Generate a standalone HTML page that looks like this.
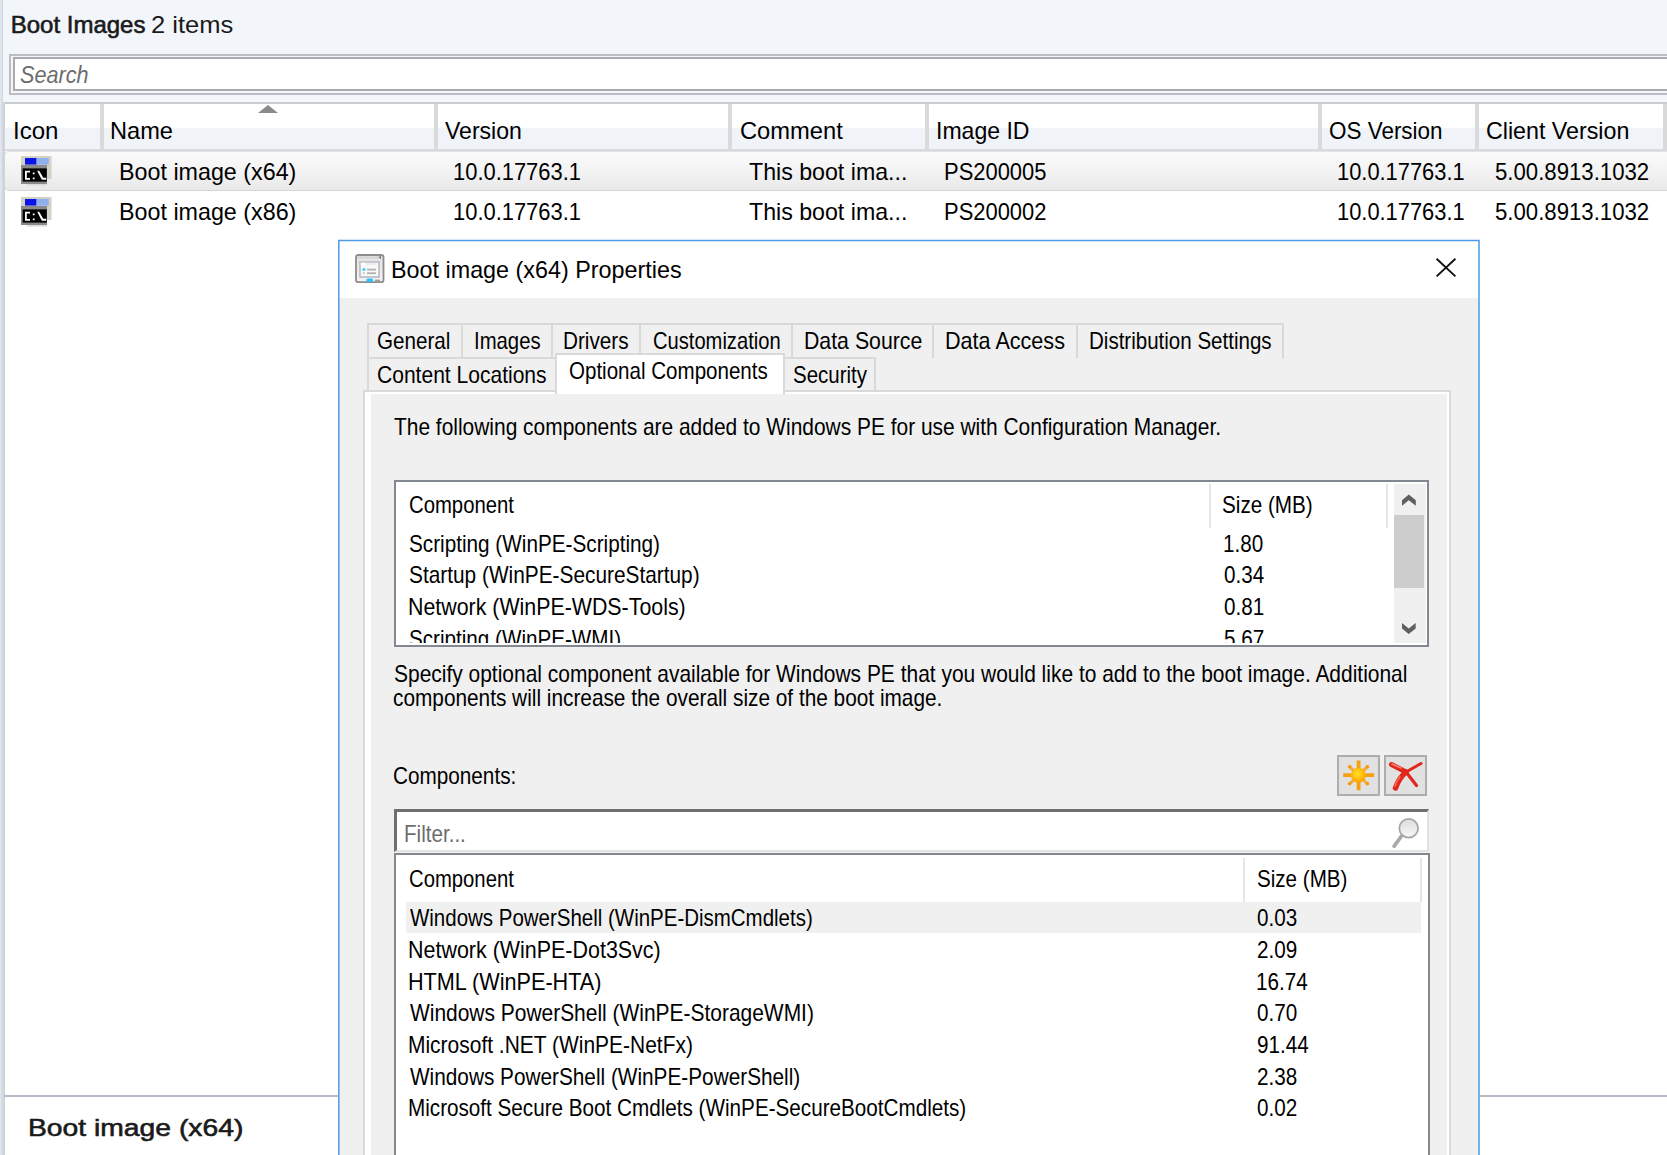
<!DOCTYPE html>
<html><head><meta charset="utf-8">
<style>
html,body{margin:0;padding:0}
body{width:1667px;height:1155px;overflow:hidden;position:relative;background:#fff;font-family:"Liberation Sans",sans-serif}
.a{position:absolute;box-sizing:border-box}
.t{position:absolute;white-space:pre;line-height:60px;font-family:"Liberation Sans",sans-serif;transform-origin:0 0}
</style></head><body>
<!-- console top band -->
<div class="a" style="left:0;top:0;width:1667px;height:102px;background:#f2f5fa"></div>
<!-- search box -->
<div class="a" style="left:9px;top:54px;width:1700px;height:41px;border:2px solid #babdc3;background:#f4f6f9"></div>
<div class="a" style="left:13px;top:57px;width:1700px;height:34px;border:2px solid #a9abb1;background:#fff"></div>
<!-- list header -->
<div class="a" style="left:3px;top:102px;width:1664px;height:2px;background:#c9ccd2"></div>
<div class="a" style="left:3px;top:104px;width:1664px;height:24px;background:#fff"></div>
<div class="a" style="left:3px;top:128px;width:1664px;height:21px;background:#f0f3f7"></div>
<div class="a" style="left:3px;top:149px;width:1664px;height:2px;background:#d7dadf"></div>
<div class="a" style="left:100px;top:104px;width:3.6px;height:45px;background:#dadada"></div>
<div class="a" style="left:434px;top:104px;width:3.6px;height:45px;background:#dadada"></div>
<div class="a" style="left:728px;top:104px;width:3.6px;height:45px;background:#dadada"></div>
<div class="a" style="left:925px;top:104px;width:3.6px;height:45px;background:#dadada"></div>
<div class="a" style="left:1318px;top:104px;width:3.6px;height:45px;background:#dadada"></div>
<div class="a" style="left:1475px;top:104px;width:3.6px;height:45px;background:#dadada"></div>
<div class="a" style="left:1663px;top:104px;width:4px;height:45px;background:#d9d9d9"></div>
<svg class="a" style="left:256px;top:103px" width="24" height="12"><polygon points="2,10 12,2 22,10" fill="#8a8a8a"/></svg>
<!-- selected row -->
<div class="a" style="left:4px;top:151px;width:1680px;height:40px;background:linear-gradient(#fbfbfb,#f1f1f1 60%,#e9e9e9);border:1px solid #d6d6d6;border-top-color:#e2e2e2;border-radius:5px 0 0 5px"></div>
<!-- cmd icons -->
<svg class="a" style="left:20px;top:154px" width="34" height="34" viewBox="20 154 34 34">
 <rect x="27" y="184.0" width="20" height="1.6" fill="#dcdcdc"/>
 <rect x="21" y="156.0" width="30.5" height="23" fill="#d2d2c8"/>
 <rect x="25" y="158.0" width="11.6" height="6.6" fill="#0a14e6"/>
 <rect x="36.6" y="158.0" width="12.1" height="6.6" fill="#8eb0ee"/>
 <rect x="21" y="165.0" width="26" height="3.5" fill="#9a9a9a"/>
 <rect x="21" y="165.0" width="26" height="19" fill="#8a8a8a"/>
 <rect x="22.6" y="168.4" width="24.2" height="13.2" fill="#000"/>
 <path d="M25 170.7 h5 v1.8 h-3.2 v5.4 h3.2 v1.8 h-5z M32.8 172.5 h1.8 v1.8 h-1.8z M32.8 177.5 h1.8 v1.8 h-1.8z M37.2 170.7 h2 l4.6 8 v1 h-2z M43.2 177.8 h3 v2 h-3z" fill="#fff"/>
</svg>
<svg class="a" style="left:20px;top:195px" width="34" height="34" viewBox="20 195 34 34">
 <rect x="27" y="225.0" width="20" height="1.6" fill="#dcdcdc"/>
 <rect x="21" y="197.0" width="30.5" height="23" fill="#d2d2c8"/>
 <rect x="25" y="199.0" width="11.6" height="6.6" fill="#0a14e6"/>
 <rect x="36.6" y="199.0" width="12.1" height="6.6" fill="#8eb0ee"/>
 <rect x="21" y="206.0" width="26" height="3.5" fill="#9a9a9a"/>
 <rect x="21" y="206.0" width="26" height="19" fill="#8a8a8a"/>
 <rect x="22.6" y="209.4" width="24.2" height="13.2" fill="#000"/>
 <path d="M25 211.7 h5 v1.8 h-3.2 v5.4 h3.2 v1.8 h-5z M32.8 213.5 h1.8 v1.8 h-1.8z M32.8 218.5 h1.8 v1.8 h-1.8z M37.2 211.7 h2 l4.6 8 v1 h-2z M43.2 218.8 h3 v2 h-3z" fill="#fff"/>
</svg>
<!-- left border -->
<div class="a" style="left:0;top:0;width:3.2px;height:1155px;background:linear-gradient(90deg,#e4eaf2,#d9e0ea 50%,#cdd5e1)"></div>
<div class="a" style="left:3.2px;top:102px;width:1.6px;height:1053px;background:#d2d3d6"></div>
<!-- detail pane line -->
<div class="a" style="left:4px;top:1095px;width:1663px;height:2px;background:#b3bac5"></div>

<!-- dialog -->
<div class="a" style="left:338px;top:240px;width:1142px;height:940px;background:#f0f0f0"></div>
<div class="a" style="left:339px;top:241px;width:1140px;height:56.5px;background:#fff"></div>
<svg class="a" style="left:336px;top:238px" width="1146" height="920" viewBox="336 238 1146 920"><path d="M338.8 1160 V240.6 H1479 V1160" fill="none" stroke="#4f9ce6" stroke-width="1.5"/></svg>
<!-- title icon -->
<svg class="a" style="left:350px;top:248px" width="40" height="40" viewBox="350 248 40 40">
 <defs><linearGradient id="tg" x1="0" y1="0" x2="0" y2="1"><stop offset="0" stop-color="#e2e2e2"/><stop offset="1" stop-color="#f4f4f4"/></linearGradient></defs>
 <rect x="356" y="255" width="27.5" height="27.2" rx="2.2" fill="url(#tg)" stroke="#8c8c8c" stroke-width="1.8"/>
 <rect x="358" y="256.6" width="22" height="2" fill="#d4d4d4"/>
 <path d="M378.4 256.6 h2.6 v2.6z" fill="#6a6a6a"/>
 <rect x="360" y="262" width="19" height="15" fill="#f8f8f8" stroke="#b6bbc5" stroke-width="1.6"/>
 <rect x="360.8" y="262.5" width="4" height="3" fill="#fff"/>
 <rect x="366.5" y="262.6" width="3.6" height="2.2" fill="#e6e6e6"/><rect x="371.6" y="262.6" width="3.6" height="2.2" fill="#e6e6e6"/>
 <circle cx="363.9" cy="269.5" r="1.6" fill="#45d0ff"/>
 <rect x="367" y="268.7" width="9" height="1.8" fill="#b2b2b2"/>
 <rect x="363" y="272.3" width="1.6" height="1.6" fill="#b8b8b8"/>
 <rect x="367" y="272.3" width="9" height="1.8" fill="#b2b2b2"/>
 <rect x="366.3" y="278.5" width="6.9" height="3.4" rx="1.6" fill="#2ec0f8"/>
 <rect x="375" y="279.6" width="5" height="1.8" fill="#9c9c9c"/>
</svg>
<!-- close X -->
<svg class="a" style="left:1434px;top:257px" width="24" height="22" viewBox="0 0 24 22">
 <path d="M2.6 1.8 L21.4 19.4 M21.4 1.8 L2.6 19.4" stroke="#111" stroke-width="1.9"/>
</svg>

<!-- tabs row 1 -->
<div class="a" style="left:367px;top:323px;width:917px;height:36px;border:2px solid #d9d9d9;border-bottom:none;background:#f0f0f0"></div>
<div class="a" style="left:461px;top:325px;width:2px;height:33px;background:#d9d9d9"></div>
<div class="a" style="left:551px;top:325px;width:2px;height:33px;background:#d9d9d9"></div>
<div class="a" style="left:639px;top:325px;width:2px;height:33px;background:#d9d9d9"></div>
<div class="a" style="left:791px;top:325px;width:2px;height:33px;background:#d9d9d9"></div>
<div class="a" style="left:932px;top:325px;width:2px;height:33px;background:#d9d9d9"></div>
<div class="a" style="left:1076px;top:325px;width:2px;height:33px;background:#d9d9d9"></div>
<!-- tabs row 2 -->
<div class="a" style="left:367px;top:357px;width:191px;height:36px;border:2px solid #d9d9d9;border-bottom:none;background:#f0f0f0"></div>
<div class="a" style="left:782px;top:357px;width:94px;height:36px;border:2px solid #d9d9d9;border-bottom:none;background:#f0f0f0"></div>
<!-- panel -->
<div class="a" style="left:363px;top:390px;width:1088px;height:800px;border:2px solid #d9d9d9;border-bottom:none;background:#fff"></div>
<div class="a" style="left:371px;top:394px;width:1076px;height:800px;background:#f0f0f0"></div>
<!-- selected tab -->
<div class="a" style="left:555px;top:353px;width:230px;height:41px;background:#fff;border:2px solid #d9d9d9;border-bottom:none"></div>
<div class="a" style="left:557px;top:389px;width:226px;height:5px;background:#fff"></div>

<!-- list 1 -->
<div class="a" style="left:394px;top:480px;width:1035px;height:167px;border:2px solid #828790;background:#fff"></div>
<div class="a" style="left:1209px;top:484px;width:2px;height:44px;background:#e5e5e5"></div>
<div class="a" style="left:1386px;top:484px;width:2px;height:44px;background:#e5e5e5"></div>
<div class="a" style="left:1394px;top:483.5px;width:32px;height:159.5px;background:#f0f0f0"></div>
<div class="a" style="left:1394px;top:515px;width:30px;height:73px;background:#cdcdcd"></div>
<svg class="a" style="left:1394px;top:484px" width="32" height="160" viewBox="1394 484 32 160">
 <polygon points="1402,505.7 1408.8,500.3 1415.8,505.7 1415.8,500.3 1408.8,494.6 1402,500.3" fill="#606060"/>
 <polygon points="1402,623.1 1408.7,628.5 1415.7,623.1 1415.7,628.5 1408.7,634 1402,628.5" fill="#606060"/>
</svg>


<!-- buttons -->
<div class="a" style="left:1337px;top:755px;width:43px;height:41px;border:2px solid #adadad;background:#e1e1e1"></div>
<div class="a" style="left:1384px;top:755px;width:43px;height:41px;border:2px solid #adadad;background:#e1e1e1"></div>
<svg class="a" style="left:1338px;top:756px" width="42" height="40" viewBox="1338 756 42 40">
 <defs><radialGradient id="sg" cx=".45" cy=".4" r=".6"><stop offset="0" stop-color="#ffe030"/><stop offset=".55" stop-color="#ffc00a"/><stop offset="1" stop-color="#ffa000"/></radialGradient></defs>
 <g stroke="#f5a00f" stroke-width="3.8">
  <path d="M1358.6 760.5 V790.3 M1343.2 775.2 H1374.2"/>
 </g>
 <g stroke="#f6a415" stroke-width="3" opacity=".85">
  <path d="M1349.4 766.6 L1367.6 784 M1367.6 766.6 L1349.4 784"/>
 </g>
 <circle cx="1349.6" cy="766.8" r="1.8" fill="#f39a0a"/><circle cx="1367.4" cy="766.8" r="1.8" fill="#f39a0a"/>
 <circle cx="1349.6" cy="783.8" r="1.8" fill="#f39a0a"/><circle cx="1367.4" cy="783.8" r="1.8" fill="#f39a0a"/>
 <circle cx="1358.4" cy="775.2" r="7.4" fill="url(#sg)"/>
</svg>
<svg class="a" style="left:1385px;top:756px" width="42" height="40" viewBox="1385 756 42 40">
 <g stroke="#e2261a" stroke-linecap="round" fill="none">
  <path d="M1391.5 764.5 L1406 772" stroke-width="5"/>
  <path d="M1406 772 L1416.5 785.5" stroke-width="3.2"/>
  <path d="M1421 763.5 L1406 772" stroke-width="3"/>
  <path d="M1406 772 Q1399 778 1395.5 788" stroke-width="5.4"/>
 </g>
 <path d="M1392 764 L1401 768" stroke="#ff8074" stroke-width="1.6" fill="none" stroke-linecap="round"/>
 <path d="M1395 786 Q1397 780 1400 777" stroke="#ff6a5c" stroke-width="1.6" fill="none" stroke-linecap="round"/>
</svg>

<!-- filter box -->
<div class="a" style="left:394px;top:809px;width:1035px;height:43px;background:#fff;border-top:3px solid #6f6f6f;border-left:3px solid #6f6f6f;border-right:2px solid #e3e3e3;border-bottom:2px solid #e3e3e3"></div>
<svg class="a" style="left:1385px;top:814px" width="40" height="36" viewBox="1385 814 40 36">
 <defs><linearGradient id="mgg" x1="0" y1="0" x2="0" y2="1"><stop offset="0" stop-color="#dcdcdc"/><stop offset="1" stop-color="#f8f8f8"/></linearGradient></defs>
 <path d="M1401.8 835.6 L1394 846.4" stroke="#a9a9a9" stroke-width="3.6" stroke-linecap="round"/>
 <circle cx="1408.7" cy="828.2" r="9.4" fill="url(#mgg)" stroke="#a6a6a6" stroke-width="1.8"/>
</svg>

<!-- list 2 -->
<div class="a" style="left:394px;top:853px;width:1036px;height:340px;border:2px solid #828790;background:#fff"></div>
<div class="a" style="left:1243px;top:858px;width:2px;height:44px;background:#e5e5e5"></div>
<div class="a" style="left:1420px;top:858px;width:2px;height:44px;background:#e5e5e5"></div>
<div class="a" style="left:406px;top:902px;width:1015px;height:31px;background:#f0f0f0"></div>

<div class="t" style="left:10.70px;top:-5.00px;font-size:24px;color:#1a1a1a;-webkit-text-stroke:0.6px #1a1a1a;">Boot Images</div>
<div class="t" style="left:151.14px;top:-5.00px;font-size:24px;color:#1a1a1a;transform:scaleX(1.0632);">2 items</div>
<div class="t" style="left:20.10px;top:45.20px;font-size:24px;color:#6d6d6d;font-style:italic;transform:scaleX(0.9014);">Search</div>
<div class="t" style="left:12.50px;top:101.00px;font-size:24px;color:#000;transform:scaleX(1.0024);">Icon</div>
<div class="t" style="left:110.43px;top:101.00px;font-size:24px;color:#000;transform:scaleX(0.9836);">Name</div>
<div class="t" style="left:445.00px;top:101.00px;font-size:24px;color:#000;transform:scaleX(0.9600);">Version</div>
<div class="t" style="left:739.51px;top:101.00px;font-size:24px;color:#000;transform:scaleX(0.9874);">Comment</div>
<div class="t" style="left:935.58px;top:101.00px;font-size:24px;color:#000;transform:scaleX(0.9600);">Image ID</div>
<div class="t" style="left:1328.76px;top:101.00px;font-size:24px;color:#000;transform:scaleX(0.9353);">OS Version</div>
<div class="t" style="left:1485.73px;top:101.00px;font-size:24px;color:#000;transform:scaleX(0.9678);">Client Version</div>
<div class="t" style="left:119.06px;top:141.70px;font-size:24px;color:#000;transform:scaleX(0.9704);">Boot image (x64)</div>
<div class="t" style="left:453.37px;top:141.70px;font-size:24px;color:#000;transform:scaleX(0.9131);">10.0.17763.1</div>
<div class="t" style="left:748.60px;top:141.70px;font-size:24px;color:#000;transform:scaleX(0.9654);">This boot ima...</div>
<div class="t" style="left:943.77px;top:141.70px;font-size:24px;color:#000;transform:scaleX(0.9138);">PS200005</div>
<div class="t" style="left:1337.38px;top:141.70px;font-size:24px;color:#000;transform:scaleX(0.9109);">10.0.17763.1</div>
<div class="t" style="left:1494.58px;top:141.70px;font-size:24px;color:#000;transform:scaleX(0.9242);">5.00.8913.1032</div>
<div class="t" style="left:119.06px;top:182.30px;font-size:24px;color:#000;transform:scaleX(0.9704);">Boot image (x86)</div>
<div class="t" style="left:453.37px;top:182.30px;font-size:24px;color:#000;transform:scaleX(0.9131);">10.0.17763.1</div>
<div class="t" style="left:748.60px;top:182.30px;font-size:24px;color:#000;transform:scaleX(0.9654);">This boot ima...</div>
<div class="t" style="left:943.77px;top:182.30px;font-size:24px;color:#000;transform:scaleX(0.9138);">PS200002</div>
<div class="t" style="left:1337.38px;top:182.30px;font-size:24px;color:#000;transform:scaleX(0.9109);">10.0.17763.1</div>
<div class="t" style="left:1494.58px;top:182.30px;font-size:24px;color:#000;transform:scaleX(0.9242);">5.00.8913.1032</div>
<div class="t" style="left:27.69px;top:1098.30px;font-size:24.5px;color:#1a1a1a;-webkit-text-stroke:0.6px #1a1a1a;transform:scaleX(1.1543);">Boot image (x64)</div>
<div class="t" style="left:390.55px;top:240.00px;font-size:24px;color:#000;transform:scaleX(0.9726);">Boot image (x64) Properties</div>
<div class="t" style="left:377.14px;top:311.20px;font-size:24px;color:#000;transform:scaleX(0.8590);">General</div>
<div class="t" style="left:474.01px;top:311.20px;font-size:24px;color:#000;transform:scaleX(0.8461);">Images</div>
<div class="t" style="left:563.47px;top:311.20px;font-size:24px;color:#000;transform:scaleX(0.8630);">Drivers</div>
<div class="t" style="left:652.56px;top:311.20px;font-size:24px;color:#000;transform:scaleX(0.8393);">Customization</div>
<div class="t" style="left:804.23px;top:311.20px;font-size:24px;color:#000;transform:scaleX(0.8869);">Data Source</div>
<div class="t" style="left:944.90px;top:311.20px;font-size:24px;color:#000;transform:scaleX(0.8992);">Data Access</div>
<div class="t" style="left:1088.79px;top:311.20px;font-size:24px;color:#000;transform:scaleX(0.8555);">Distribution Settings</div>
<div class="t" style="left:377.12px;top:345.00px;font-size:24px;color:#000;transform:scaleX(0.8766);">Content Locations</div>
<div class="t" style="left:792.95px;top:345.00px;font-size:24px;color:#000;transform:scaleX(0.8535);">Security</div>
<div class="t" style="left:569.34px;top:340.90px;font-size:24px;color:#000;transform:scaleX(0.8563);">Optional Components</div>
<div class="t" style="left:394.20px;top:396.80px;font-size:24px;color:#000;transform:scaleX(0.8719);">The following components are added to Windows PE for use with Configuration Manager.</div>
<div class="t" style="left:408.85px;top:475.00px;font-size:24px;color:#000;transform:scaleX(0.8455);">Component</div>
<div class="t" style="left:1222.14px;top:475.00px;font-size:24px;color:#000;transform:scaleX(0.8612);">Size (MB)</div>
<div class="t" style="left:409.34px;top:513.60px;font-size:24px;color:#000;transform:scaleX(0.8632);">Scripting (WinPE-Scripting)</div>
<div class="t" style="left:1222.78px;top:513.60px;font-size:24px;color:#000;transform:scaleX(0.8600);">1.80</div>
<div class="t" style="left:409.33px;top:545.27px;font-size:24px;color:#000;transform:scaleX(0.8681);">Startup (WinPE-SecureStartup)</div>
<div class="t" style="left:1223.64px;top:545.27px;font-size:24px;color:#000;transform:scaleX(0.8600);">0.34</div>
<div class="t" style="left:408.42px;top:576.94px;font-size:24px;color:#000;transform:scaleX(0.8900);">Network (WinPE-WDS-Tools)</div>
<div class="t" style="left:1223.64px;top:576.94px;font-size:24px;color:#000;transform:scaleX(0.8600);">0.81</div>
<div class="t" style="left:409.34px;top:608.61px;font-size:24px;color:#000;transform:scaleX(0.8600);height:34.39px;overflow:hidden">Scripting (WinPE-WMI)</div>
<div class="t" style="left:1223.64px;top:608.61px;font-size:24px;color:#000;transform:scaleX(0.8600);height:34.39px;overflow:hidden">5.67</div>
<div class="t" style="left:394.13px;top:644.00px;font-size:24px;color:#000;transform:scaleX(0.8731);">Specify optional component available for Windows PE that you would like to add to the boot image. Additional</div>
<div class="t" style="left:392.83px;top:668.30px;font-size:24px;color:#000;transform:scaleX(0.8669);">components will increase the overall size of the boot image.</div>
<div class="t" style="left:393.14px;top:746.20px;font-size:24px;color:#000;transform:scaleX(0.8636);">Components:</div>
<div class="t" style="left:403.68px;top:804.20px;font-size:24px;color:#6d6d6d;transform:scaleX(0.8588);">Filter...</div>
<div class="t" style="left:409.26px;top:848.80px;font-size:24px;color:#000;transform:scaleX(0.8447);">Component</div>
<div class="t" style="left:1256.74px;top:849.00px;font-size:24px;color:#000;transform:scaleX(0.8583);">Size (MB)</div>
<div class="t" style="left:410.00px;top:888.20px;font-size:24px;color:#000;transform:scaleX(0.8531);">Windows PowerShell (WinPE-DismCmdlets)</div>
<div class="t" style="left:1256.74px;top:888.20px;font-size:24px;color:#000;transform:scaleX(0.8600);">0.03</div>
<div class="t" style="left:408.21px;top:919.87px;font-size:24px;color:#000;transform:scaleX(0.8939);">Network (WinPE-Dot3Svc)</div>
<div class="t" style="left:1256.74px;top:919.87px;font-size:24px;color:#000;transform:scaleX(0.8600);">2.09</div>
<div class="t" style="left:408.20px;top:951.54px;font-size:24px;color:#000;transform:scaleX(0.9014);">HTML (WinPE-HTA)</div>
<div class="t" style="left:1255.88px;top:951.54px;font-size:24px;color:#000;transform:scaleX(0.8600);">16.74</div>
<div class="t" style="left:410.00px;top:983.21px;font-size:24px;color:#000;transform:scaleX(0.8727);">Windows PowerShell (WinPE-StorageWMI)</div>
<div class="t" style="left:1256.74px;top:983.21px;font-size:24px;color:#000;transform:scaleX(0.8600);">0.70</div>
<div class="t" style="left:408.25px;top:1014.88px;font-size:24px;color:#000;transform:scaleX(0.8734);">Microsoft .NET (WinPE-NetFx)</div>
<div class="t" style="left:1256.74px;top:1014.88px;font-size:24px;color:#000;transform:scaleX(0.8600);">91.44</div>
<div class="t" style="left:410.00px;top:1046.55px;font-size:24px;color:#000;transform:scaleX(0.8657);">Windows PowerShell (WinPE-PowerShell)</div>
<div class="t" style="left:1256.74px;top:1046.55px;font-size:24px;color:#000;transform:scaleX(0.8600);">2.38</div>
<div class="t" style="left:408.28px;top:1078.22px;font-size:24px;color:#000;transform:scaleX(0.8612);">Microsoft Secure Boot Cmdlets (WinPE-SecureBootCmdlets)</div>
<div class="t" style="left:1256.74px;top:1078.22px;font-size:24px;color:#000;transform:scaleX(0.8600);">0.02</div>
</body></html>
